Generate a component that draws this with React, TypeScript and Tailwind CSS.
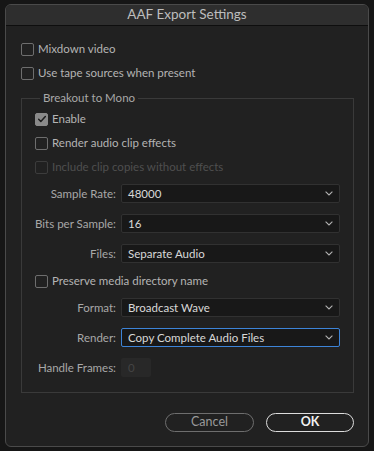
import { ReactNode } from "react";

const Check = ({
  label,
  checked = false,
  disabled = false,
}: {
  label: string;
  checked?: boolean;
  disabled?: boolean;
}) => (
  <div className="flex items-center h-6 gap-[4px]">
    <div
      className={`w-[13px] h-[13px] rounded-[2px] border-[1.5px] flex items-center justify-center ${
        checked
          ? "bg-[#8a8a8a] border-[#8a8a8a]"
          : disabled
          ? "border-[#3c3c3c]"
          : "border-[#6e6e6e]"
      }`}
    >
      {checked && (
        <svg viewBox="0 0 12 12" className="w-[10px] h-[10px]" fill="none">
          <path
            d="M2 6.3l2.6 2.7L10 3"
            stroke="#1e1e1e"
            strokeWidth="1.8"
            strokeLinecap="round"
            strokeLinejoin="round"
          />
        </svg>
      )}
    </div>
    <span className={disabled ? "text-[#4f4f4f]" : "text-[#b4b4b4]"}>
      {label}
    </span>
  </div>
);

const Field = ({ label, children }: { label: string; children: ReactNode }) => (
  <div className="flex items-center h-[19px]">
    <span className="w-[95px] text-right pr-[5px] text-[#a8a8a8]">{label}</span>
    {children}
  </div>
);

const Select = ({ value, focused = false }: { value: string; focused?: boolean }) => (
  <div
    className={`w-[219px] h-[19px] flex items-center justify-between pl-[6px] pr-[6px] rounded-[2px] bg-[#181818] border ${
      focused ? "border-[#3d84d8]" : "border-[#313131]"
    }`}
  >
    <span className="text-[#d8d8d8]">{value}</span>
    <svg viewBox="0 0 8 5" className="w-[8px] h-[5px]" fill="none">
      <path d="M0.6 0.6L4 4L7.4 0.6" stroke="#b0b0b0" strokeWidth="1.1" />
    </svg>
  </div>
);

export default function App() {
  return (
    <div
      className="w-[374px] h-[451px] bg-[#161616] pt-[4px] pl-[5px] text-[11.5px] leading-none"
      style={{ fontFamily: "Lato, 'Liberation Sans', sans-serif" }}
    >
      <div className="w-[364px] h-[443px] rounded-[6px] border border-[#4a4a4a] bg-[#212121] overflow-hidden flex flex-col">
        <div className="h-[21px] shrink-0 bg-[#2e2e2e] border-b border-[#0e0e0e] flex items-center justify-center text-[13.5px] text-[#bdbdbd]">
          AAF Export Settings
        </div>
        <div className="pl-[15px] pt-[11px] flex flex-col">
          <Check label="Mixdown video" />
          <Check label="Use tape sources when present" />
        </div>
        <fieldset className="ml-[15px] mt-[7px] w-[333px] h-[301px] shrink-0 border border-[#3a3a3a] pl-[13px] pt-[3px]">
          <legend className="ml-[5px] px-[3px] h-[12px] leading-[12px] text-[#a8a8a8]">
            Breakout to Mono
          </legend>
          <Check label="Enable" checked />
          <Check label="Render audio clip effects" />
          <Check label="Include clip copies without effects" disabled />
          <div className="flex flex-col gap-[11px] mt-[5px] -ml-[13px] pl-[4px]">
            <Field label="Sample Rate:">
              <Select value="48000" />
            </Field>
            <Field label="Bits per Sample:">
              <Select value="16" />
            </Field>
            <Field label="Files:">
              <Select value="Separate Audio" />
            </Field>
          </div>
          <div className="mt-[6px]">
            <Check label="Preserve media directory name" />
          </div>
          <div className="flex flex-col gap-[11px] mt-[5px] -ml-[13px] pl-[4px]">
            <Field label="Format:">
              <Select value="Broadcast Wave" />
            </Field>
            <Field label="Render:">
              <Select value="Copy Complete Audio Files" focused />
            </Field>
            <Field label="Handle Frames:">
              <div className="w-[30px] h-[19px] rounded-[2px] bg-[#282828] flex items-center pl-[7px] text-[#444]">
                0
              </div>
            </Field>
          </div>
        </fieldset>
        <div className="flex justify-end gap-[12px] pr-[14px] mt-[20px]">
          <button className="w-[89px] h-[19px] rounded-full border-[1.5px] border-[#6e6e6e] text-[#9a9a9a] text-[12.5px] flex items-center justify-center">
            Cancel
          </button>
          <button className="w-[88px] h-[19px] rounded-full border-[1.5px] border-[#dcdcdc] text-[#f0f0f0] text-[12.5px] font-bold flex items-center justify-center">
            OK
          </button>
        </div>
      </div>
    </div>
  );
}
